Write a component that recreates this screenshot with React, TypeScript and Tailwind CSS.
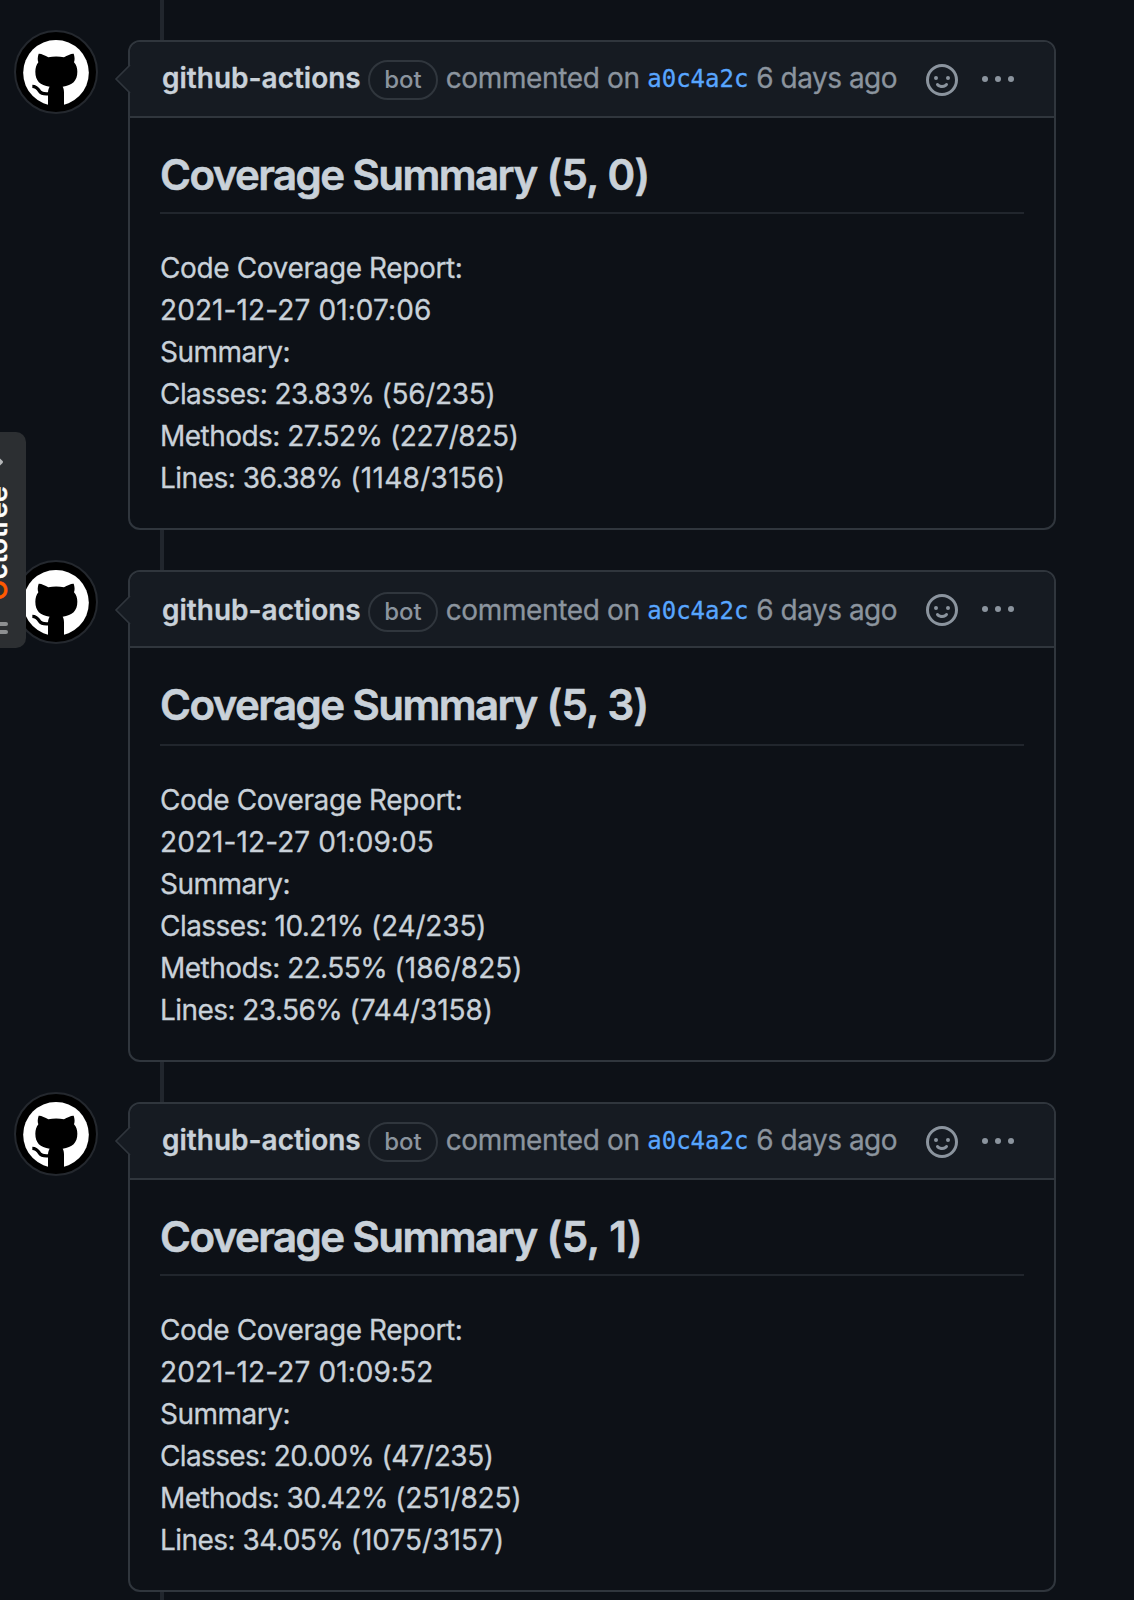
type Line = { head: string; headTracking: string; tail?: string; tailTracking?: string };
type Comment = {
  value: string;
  valueTracking: string;
  height: string;
  metaOffset: string;
  caretTop: string;
  headingPad: string;
  lines: Line[];
};

const comments: Comment[] = [
  {
    value: '(5, 0)',
    valueTracking: 'tracking-[-0.8px]',
    height: 'h-[490px]',
    metaOffset: 'pt-[15px]',
    caretTop: 'top-[23px]',
    headingPad: 'pb-[11px]',
    lines: [
      { head: 'Code Coverage Report:', headTracking: 'tracking-[-0.38px]' },
      { head: '2021-12-27 01:07:06', headTracking: 'tracking-[0.1px]' },
      { head: 'Summary:', headTracking: 'tracking-[-0.5px]' },
      { head: 'Classes: 23.83% ', headTracking: 'tracking-[-0.57px]', tail: '(56/235)', tailTracking: 'tracking-[-0.31px]' },
      { head: 'Methods: 27.52% ', headTracking: 'tracking-[-0.54px]', tail: '(227/825)', tailTracking: 'tracking-[-0.37px]' },
      { head: 'Lines: 36.38% ', headTracking: 'tracking-[-0.5px]', tail: '(1148/3156)', tailTracking: 'tracking-[0.31px]' },
    ],
  },
  {
    value: '(5, 3)',
    valueTracking: 'tracking-[-0.8px]',
    height: 'h-[492px]',
    metaOffset: 'pt-[17px]',
    caretTop: 'top-[24px]',
    headingPad: 'pb-[13px]',
    lines: [
      { head: 'Code Coverage Report:', headTracking: 'tracking-[-0.38px]' },
      { head: '2021-12-27 01:09:05', headTracking: 'tracking-[0.09px]' },
      { head: 'Summary:', headTracking: 'tracking-[-0.5px]' },
      { head: 'Classes: 10.21% ', headTracking: 'tracking-[-0.55px]', tail: '(24/235)', tailTracking: 'tracking-[-0.17px]' },
      { head: 'Methods: 22.55% ', headTracking: 'tracking-[-0.54px]', tail: '(186/825)', tailTracking: 'tracking-[-0.02px]' },
      { head: 'Lines: 23.56% ', headTracking: 'tracking-[-0.56px]', tail: '(744/3158)', tailTracking: 'tracking-[-0.05px]' },
    ],
  },
  {
    value: '(5, 1)',
    valueTracking: 'tracking-[-0.4px]',
    height: 'h-[490px]',
    metaOffset: 'pt-[15px]',
    caretTop: 'top-[23px]',
    headingPad: 'pb-[11px]',
    lines: [
      { head: 'Code Coverage Report:', headTracking: 'tracking-[-0.38px]' },
      { head: '2021-12-27 01:09:52', headTracking: 'tracking-[0.1px]' },
      { head: 'Summary:', headTracking: 'tracking-[-0.5px]' },
      { head: 'Classes: 20.00% ', headTracking: 'tracking-[-0.64px]', tail: '(47/235)', tailTracking: 'tracking-[-0.48px]' },
      { head: 'Methods: 30.42% ', headTracking: 'tracking-[-0.6px]', tail: '(251/825)', tailTracking: 'tracking-[-0.13px]' },
      { head: 'Lines: 34.05% ', headTracking: 'tracking-[-0.53px]', tail: '(1075/3157)', tailTracking: 'tracking-[0.03px]' },
    ],
  },
];

function Avatar() {
  return (
    <div className="-mt-2.5 ml-3.5 size-[84px] shrink-0 overflow-hidden rounded-full border-2 border-[#24282e] bg-black">
      <svg viewBox="18 18 240 240" className="size-20">
        <circle cx="138" cy="140.500" r="98.500" fill="#fff" />
        <path
          d="M86 83C93 82 105 88 115 94C130 91 147 91 162 94C172 88 184 82 191 83C194 92 195 101 192 109C199 117 202 126 202 137C202 164 187 178 158 182C161 187 162 193 162 200V245H114V200C114 193 116 187 119 182C90 178 76 164 76 137C76 126 79 117 85 109C82 101 83 92 86 83Z"
          fill="#000"
        />
        <path d="M67 181C80 181 84 188 89 196C93 202 101 205 118 203" fill="none" stroke="#000" strokeWidth="10" />
      </svg>
    </div>
  );
}

function Smiley() {
  return (
    <svg viewBox="0 0 16 16" className="size-8" fill="#8b949e">
      <path
        fillRule="evenodd"
        d="M1.5 8a6.5 6.5 0 1113 0 6.5 6.5 0 01-13 0zM8 0a8 8 0 100 16A8 8 0 008 0zM5 8a1 1 0 100-2 1 1 0 000 2zm7-1a1 1 0 11-2 0 1 1 0 012 0zM5.32 9.636a.75.75 0 011.038.175l.007.009c.103.118.22.222.35.31.264.178.683.37 1.285.37.602 0 1.02-.192 1.285-.371.13-.088.247-.192.35-.31l.007-.008a.75.75 0 111.222.87l-.614-.431c.614.43.614.431.613.431v.001l-.001.002-.002.003-.005.007-.014.019a1.984 1.984 0 01-.184.213c-.16.166-.338.316-.53.445-.63.418-1.37.638-2.127.629-.946 0-1.652-.308-2.126-.63a3.331 3.331 0 01-.715-.657l-.014-.02-.005-.006-.002-.003v-.002h-.001l.613-.432-.614.43a.75.75 0 01.183-1.044h.001z"
      />
    </svg>
  );
}

function Kebab() {
  return (
    <svg viewBox="0 0 16 16" className="size-8" fill="#8b949e">
      <circle cx="1.5" cy="7.5" r="1.5" />
      <circle cx="8" cy="7.5" r="1.5" />
      <circle cx="14.5" cy="7.5" r="1.5" />
    </svg>
  );
}

function CommentCard({ comment }: { comment: Comment }) {
  return (
    <article
      className={`relative w-[928px] rounded-xl border-2 border-[#30363d] bg-[#0d1117] ${comment.height}`}
    >
      <svg
        viewBox="0 0 18 28"
        className={`absolute left-[-16px] h-7 w-[18px] ${comment.caretTop}`}
      >
        <path d="M18 -2L16 0L2 14L16 28L18 30Z" fill="#161b22" />
        <path d="M16 0L2 14L16 28" fill="none" stroke="#30363d" strokeWidth="1.6" />
      </svg>
      <header className="flex h-[76px] items-start rounded-t-[10px] border-b-2 border-[#30363d] bg-[#161b22] pr-10 pl-8 text-[28px] leading-[42px] whitespace-nowrap text-[#8b949e]">
        <div className={`flex items-start ${comment.metaOffset}`}>
          <strong className="font-semibold text-[#c9d1d9] [-webkit-text-stroke:0.3px]">github-actions</strong>
          <span className="mt-[3px] ml-[7.3px] h-10 w-[70px] rounded-full border-2 border-[#30363d] text-center text-2xl leading-9 font-medium">
            bot
          </span>
          <span className="ml-[7.7px] tracking-[-0.37px] [-webkit-text-stroke:0.3px]">commented on</span>
          <a className="ml-[7.7px] font-['DejaVu_Sans_Mono',monospace] text-2xl leading-[44px] text-[#58a6ff] [-webkit-text-stroke:0.3px]">
            a0c4a2c
          </a>
          <span className="ml-[7.9px] tracking-[-0.5px] [-webkit-text-stroke:0.3px]">6 days ago</span>
        </div>
        <div className="ml-auto flex gap-6 pt-[22px]">
          <Smiley />
          <Kebab />
        </div>
      </header>
      <div className="px-[30px] pt-[31px]">
        <h2
          className={`border-b-2 border-[#21262d] text-[42px] leading-[52px] font-semibold whitespace-pre text-[#c9d1d9] [-webkit-text-stroke:0.6px] ${comment.headingPad}`}
        >
          <span className="tracking-[-1.55px]">Coverage Summary </span>
          <span className={`ml-px ${comment.valueTracking}`}>{comment.value}</span>
        </h2>
        <div className="pt-[33px] text-[28px] leading-[42px] text-[#c9d1d9] [-webkit-text-stroke:0.3px]">
          {comment.lines.map((line) => (
            <p key={line.head} className="whitespace-pre">
              <span className={line.headTracking}>{line.head}</span>
              {line.tail && <span className={line.tailTracking}>{line.tail}</span>}
            </p>
          ))}
        </div>
      </div>
    </article>
  );
}

function OctotreeTab() {
  return (
    <aside className="absolute top-[432px] left-0 h-[216px] w-[26px] overflow-hidden rounded-r-[10px] bg-[#2c2f32]">
      <svg viewBox="0 0 8 16" className="absolute top-[22px] left-0 h-4 w-2">
        <path d="M-4 3L1.200 8L-4 13" fill="none" stroke="#b4b6b8" strokeWidth="3.4" strokeLinejoin="round" />
      </svg>
      <span className="absolute bottom-12 -left-5 rotate-180 text-[27.5px] leading-[34px] font-medium text-white [-webkit-text-stroke:0.5px] [writing-mode:vertical-rl]">
        <span className="text-[#ff5a00]">O</span>ctotree
      </span>
      <span className="absolute top-[190px] -left-2 h-1 w-4 rounded-full bg-[#8d8f91]" />
      <span className="absolute top-[198px] -left-2 h-1 w-4 rounded-full bg-[#8d8f91]" />
    </aside>
  );
}

function Connector() {
  return <div className="ml-40 h-10 w-1 bg-[#21262d]" />;
}

export default function App() {
  return (
    <main className="relative h-[1600px] w-[1134px] overflow-hidden bg-[#0d1117] font-['Inter',sans-serif]">
      {comments.map((comment) => (
        <section key={comment.value}>
          <Connector />
          <div className="flex items-start">
            <div className="w-32 shrink-0">
              <Avatar />
            </div>
            <CommentCard comment={comment} />
          </div>
        </section>
      ))}
      <Connector />
      <OctotreeTab />
    </main>
  );
}
